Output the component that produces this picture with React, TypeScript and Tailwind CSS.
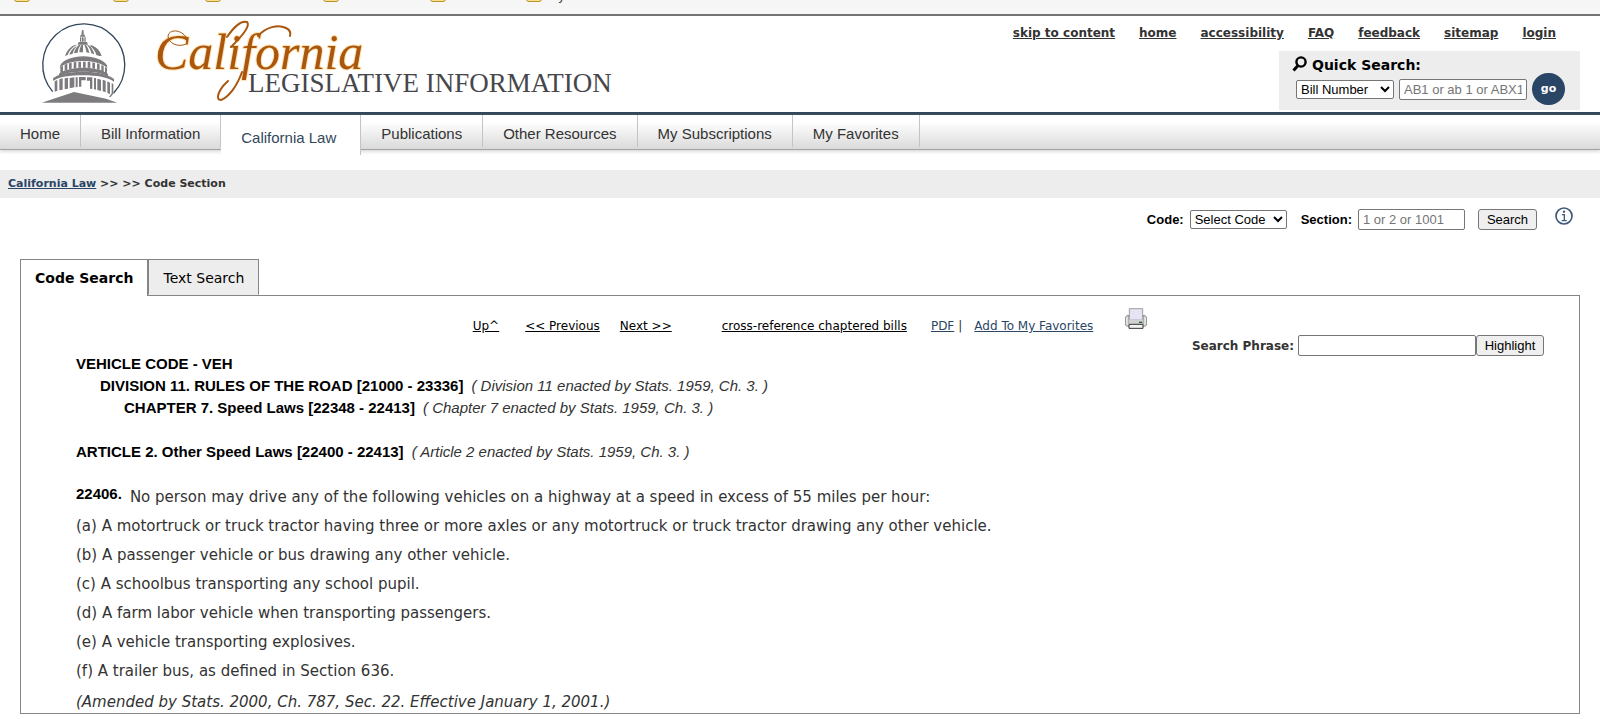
import type { ReactNode } from "react";

const topLinks = ["skip to content", "home", "accessibility", "FAQ", "feedback", "sitemap", "login"];

const menu = [
    "Home",
    "Bill Information",
    "California Law",
    "Publications",
    "Other Resources",
    "My Subscriptions",
    "My Favorites",
];

const paragraphs = [
    "(a) A motortruck or truck tractor having three or more axles or any motortruck or truck tractor drawing any other vehicle.",
    "(b) A passenger vehicle or bus drawing any other vehicle.",
    "(c) A schoolbus transporting any school pupil.",
    "(d) A farm labor vehicle when transporting passengers.",
    "(e) A vehicle transporting explosives.",
    "(f) A trailer bus, as defined in Section 636.",
];

const field = "h-[21px] rounded-xs border border-[#767676] bg-white px-1 font-['Liberation_Sans',sans-serif] text-[13px] leading-4 text-black placeholder:text-[#757575]";
const dropdown = "h-[19px] rounded-xs border border-[#767676] bg-white font-['Liberation_Sans',sans-serif] text-[13px] leading-4 text-black";
const button = "h-[21px] rounded-[3px] border border-[#767676] bg-[#efefef] font-['Liberation_Sans',sans-serif] text-[13px] leading-4 text-black";

function Folder() {
    return <span className="h-3 w-4 rounded-[3px] border border-[#b8922e] bg-[#fbe08a]" />;
}

function Capitol() {
    return (
        <svg className="h-[100px] w-[110px]" viewBox="0 0 330 300" role="img" aria-label="Capitol dome">
            <path d="M68 245A123 123 0 1 1 251 249" fill="none" stroke="#33475b" strokeWidth="4" />
            <g fill="#7d7b7e">
                <path d="M156 60h4l2 14h-8z" />
                <path d="M152 74h12l2 6h-16zM150 82h4v13h-4zM156 82h5v13h-5zM163 82h4v13h-4zM146 96h25l3 8h-31z" />
                {/* ribs of the dome */}
                <path d="M141 104l-7 1c-14 6-24 17-29 33l8-3c4-13 14-24 28-31z" />
                <path d="M136 110c-10 7-15 14-18 24l10-3c2-9 6-15 12-22z" />
                <path d="M146 105c-7 7-12 14-14 25l11-2c1-9 4-16 9-23z" />
                <path d="M154 105c-4 8-6 14-6 22h11v-22z" />
                <path d="M163 105c4 8 5 14 6 22l9 2c-2-10-5-17-10-24z" />
                <path d="M171 105c8 8 11 15 13 25l9 3c-3-11-8-20-17-27z" />
                <path d="M179 107c11 8 17 16 20 28l9 3h7c-5-16-15-26-30-32z" />
                {/* upper drum */}
                <path d="M91 166c8-16 38-27 69-27s61 11 71 27l1 8c-16-14-42-21-72-21s-58 7-71 21z" />
                <path d="M91 172l8-5v18l-8 4zM104 164l8-3v18l-8 3zM117 160l8-2v18l-8 2zM131 157l8-1v19l-8 1zM145 155h8v18h-8zM159 155h8v18h-8zM173 155l8 1v18l-8-1zM187 157l8 2v18l-8-2zM201 160l8 3v18l-8-3zM214 165l7 3v18l-7-3zM225 171l6 4v18l-6-4z" />
                <path d="M87 191c12-11 42-18 73-18s62 7 74 19v7c-17-10-43-14-74-14s-57 4-73 13z" />
                {/* lower drum and columns */}
                <path d="M69 205c14-13 50-20 91-20s76 8 92 22v8c-19-13-51-19-92-19s-74 5-90 17z" />
                <path d="M74 214l8-4v32l-8 3zM88 208l10-3v34l-10 2zM104 205l10-2v33l-10 2zM119 204l14-2v30l-14 3zM137 202h6v29l-6 1zM147 201h20v10h-13v19h-7zM171 202h16v35l-7-1v-24h-9zM192 204h6v35l-6-1zM202 206l11 3v34l-11-3zM218 209l9 3v35l-9-3zM232 214l8 4v34l-8-3zM245 219l5 3v29l-5 4z" />
                <path d="M35 278l97-32 96 20 34 12z" />
            </g>
            <path d="M74 254l61-20 106 24v7l-106-21z" fill="#fff" />
            <path d="M244 251l7-2-9 12h-5z" fill="#7d7b7e" />
        </svg>
    );
}

function Wordmark() {
    return (
        <svg className="h-[100px] w-[480px]" viewBox="0 0 480 100" role="img" aria-label="California Legislative Information">
            <text
                x="15"
                y="59"
                fontSize="50"
                fontStyle="italic"
                fontFamily="'Liberation Serif', serif"
                fill="#a9560f"
                stroke="#ffe2ae"
                strokeWidth="2"
                strokeLinejoin="round"
                paintOrder="stroke"
            >
                California
            </text>
            {/* ornamental swashes round the lettering */}
            <g fill="none" stroke="#a9560f" strokeLinecap="round">
                <path d="M46 34C38 38 28 33 28 26C29 19 41 19 46 27" strokeWidth="1" />
                <path d="M87 27C93 18 101 10 107 12C111 16 101 27 91 37" strokeWidth="2" />
                <path d="M118 26C126 17 138 14 146 18C150 20 151 23 150 26" strokeWidth="2" />
                <path d="M102 62C97 76 89 87 81 90C75 90 78 80 88 71" strokeWidth="2" />
            </g>
            <text x="108" y="82" fontSize="27" fill="#47474b" fontFamily="'Liberation Serif', serif">LEGISLATIVE INFORMATION</text>
        </svg>
    );
}

function Magnifier() {
    return (
        <svg className="h-4 w-4" viewBox="0 0 16 16" fill="none" stroke="#000" aria-hidden="true">
            <circle cx="9" cy="6" r="4.6" strokeWidth="2.4" />
            <path d="M6 9.500L1.500 14.500" strokeWidth="3" />
        </svg>
    );
}

function Info() {
    return (
        <svg className="h-[18px] w-[18px]" viewBox="0 0 54 54" fill="none" stroke="#3d5a7a" aria-hidden="true">
            <circle cx="27" cy="27" r="24" strokeWidth="5" />
            <path d="M21 23h7v17M20 41h15" strokeWidth="4" />
            <circle cx="27" cy="14" r="3.500" fill="#3d5a7a" stroke="none" />
        </svg>
    );
}

function Printer() {
    return (
        <svg className="h-[22px] w-[22px]" viewBox="0 0 66 66" aria-hidden="true">
            <path d="M6 23h54q5 2 5 9v15q0 6-5 7H6q-5-1-5-7V32q0-7 5-9z" fill="#e6e6e6" stroke="#555" strokeWidth="2" />
            <path d="M13 2h40v34H13z" fill="#e4e4f4" stroke="#777" strokeWidth="2" />
            <path d="M11 34h44v14H11z" fill="#cfd2cf" />
            <path d="M10 23v25M56 23v25" stroke="#888" strokeWidth="2" />
            <path d="M12 49h42v12H12z" fill="#f4f4f4" stroke="#333" strokeWidth="3" />
            <path d="M42 43h10" stroke="#3c5a3c" strokeWidth="4" />
        </svg>
    );
}

function Heading({ title, note, className = "" }: { title: string; note?: string; className?: string }) {
    return (
        <p className={className}>
            <b className="text-black">{title}</b>
            {note && <i className="ml-2 text-[#333]">{note}</i>}
        </p>
    );
}

function ToolLink({ children, className = "" }: { children: ReactNode; className?: string }) {
    return <a href="#" className={"underline " + className}>{children}</a>;
}

export default function App() {
    return (
        <div className="bg-white pb-1 font-['DejaVu_Sans',sans-serif] text-[#333]">
            <div className="flex h-4 items-start overflow-hidden border-b-2 border-[#757373] bg-[#f6f6f6] pl-[14px]">
                <div className="-mt-[10px] flex">
                    <div className="flex w-[99px]"><Folder /></div>
                    <div className="flex w-[92px]"><Folder /></div>
                    <div className="flex w-[118px]"><Folder /></div>
                    <div className="flex w-[107px]"><Folder /></div>
                    <div className="flex w-24"><Folder /></div>
                    <div className="flex gap-4"><Folder /><span className="text-xs leading-3">y</span></div>
                </div>
            </div>

            <header className="flex justify-between border-b-3 border-[#33475b] pr-5 pb-[2px]">
                <a href="#" className="-mt-[6px] flex pl-[30px]">
                    <Capitol />
                    <Wordmark />
                </a>
                <div className="flex flex-col items-end">
                    <nav className="flex gap-6 pt-2 pr-6 text-xs leading-[18px] font-bold">
                        {topLinks.map((l) => <a key={l} href="#" className="underline">{l}</a>)}
                    </nav>
                    <form className="mt-[9px] h-[59px] w-[301px] bg-[#ededed] pl-[17px]">
                        <div className="-ml-1 flex items-center gap-1 pt-1 text-black">
                            <Magnifier />
                            <label htmlFor="quick" className="pt-[2px] text-sm leading-4 font-bold">Quick Search:</label>
                        </div>
                        <div className="flex items-center gap-[5px]">
                            <select aria-label="Search by" className={dropdown + " w-[98px]"}>
                                <option>Bill Number</option>
                            </select>
                            <input id="quick" placeholder="AB1 or ab 1 or ABX1-1" className={field + " w-32"} />
                            <button type="button" className="h-8 w-[33px] rounded-full bg-[#2a4666] text-[11px] font-bold text-white">go</button>
                        </div>
                    </form>
                </div>
            </header>

            <nav className="flex h-[35px] border-b border-[#a3a3a3] bg-linear-to-b from-white from-20% to-[#dadada] font-['Liberation_Sans',sans-serif] text-[15px] leading-[38px] shadow-[0_2px_3px_#ddd]">
                {menu.map((m) => (
                    <a
                        key={m}
                        href="#"
                        className={m === "California Law"
                            ? "h-10 border-r border-[#c4c4c4] bg-white pt-1 pr-6 pl-5 text-[#33475b]"
                            : "h-8 border-r border-[#c4c4c4] px-5"}
                    >
                        {m}
                    </a>
                ))}
            </nav>

            <div className="mt-5 bg-[#ededed] px-2 text-[11px] leading-7 font-bold">
                <a href="#" className="text-[#2a4666] underline">California Law</a> &gt;&gt; &gt;&gt; Code Section
            </div>

            <form className="flex items-center justify-end pt-[11px] pr-[27px] font-['Liberation_Sans',sans-serif] text-[13px] leading-[21px] font-bold text-black">
                <label htmlFor="code" className="mr-[6px]">Code:</label>
                <select id="code" className={dropdown + " mr-[14px] w-[97px] font-normal"}>
                    <option>Select Code</option>
                </select>
                <label htmlFor="section" className="mr-[6px]">Section:</label>
                <input id="section" placeholder="1 or 2 or 1001" className={field + " mr-[13px] w-[107px] font-normal"} />
                <button type="button" className={button + " mr-[18px] w-[59px] font-normal"}>Search</button>
                <a href="#" aria-label="Help" className="-mt-2"><Info /></a>
            </form>

            <main className="mx-5 mt-[29px]">
                <div className="flex items-start text-sm text-black">
                    <button type="button" className="relative -mb-px h-[37px] border border-b-0 border-[#858585] bg-white px-[14px] font-bold">Code Search</button>
                    <button type="button" className="h-9 border border-[#858585] border-b-[#ededed] bg-[#ededed] px-[14px] pt-[2px]">Text Search</button>
                </div>
                <section className="border border-[#858585] pt-3 pr-[35px] pl-[55px]">
                    <div className="flex items-end justify-center text-xs leading-4">
                        <ToolLink className="mr-[26px] text-black">Up^</ToolLink>
                        <ToolLink className="mr-5 text-black">&lt;&lt; Previous</ToolLink>
                        <ToolLink className="mr-[50px] text-black">Next &gt;&gt;</ToolLink>
                        <ToolLink className="mr-6 text-black">cross-reference chaptered bills</ToolLink>
                        <ToolLink className="mr-1 text-[#2a4666]">PDF</ToolLink>
                        <span className="mr-3">|</span>
                        <ToolLink className="mr-8 text-[#2a4666]">Add To My Favorites</ToolLink>
                        <a href="#" aria-label="Print" className="mb-1"><Printer /></a>
                    </div>
                    <form className="flex items-center justify-end pt-px text-xs font-bold">
                        <label htmlFor="phrase" className="mr-1">Search Phrase:</label>
                        <input id="phrase" className={field + " w-[178px] font-normal"} />
                        <button type="button" className={button + " w-[68px] font-normal"}>Highlight</button>
                    </form>

                    <div className="-mt-[3px] font-['Liberation_Sans',sans-serif] text-[15px] leading-[22px]">
                        <Heading title="VEHICLE CODE - VEH" />
                        <Heading className="ml-6" title="DIVISION 11. RULES OF THE ROAD [21000 - 23336]" note="( Division 11 enacted by Stats. 1959, Ch. 3. )" />
                        <Heading className="ml-12" title="CHAPTER 7. Speed Laws [22348 - 22413]" note="( Chapter 7 enacted by Stats. 1959, Ch. 3. )" />
                        <Heading className="mt-[22px]" title="ARTICLE 2. Other Speed Laws [22400 - 22413]" note="( Article 2 enacted by Stats. 1959, Ch. 3. )" />
                    </div>

                    <div className="mt-5 text-[15px] leading-[29px]">
                        <div className="flex gap-2">
                            <h6 className="-mt-1 font-['Liberation_Sans',sans-serif] font-bold text-black">22406.</h6>
                            <p>No person may drive any of the following vehicles on a highway at a speed in excess of 55 miles per hour:</p>
                        </div>
                        {paragraphs.map((p) => <p key={p}>{p}</p>)}
                        <p className="mt-[5px] leading-[22px] italic">(Amended by Stats. 2000, Ch. 787, Sec. 22. Effective January 1, 2001.)</p>
                    </div>
                </section>
            </main>
        </div>
    );
}
